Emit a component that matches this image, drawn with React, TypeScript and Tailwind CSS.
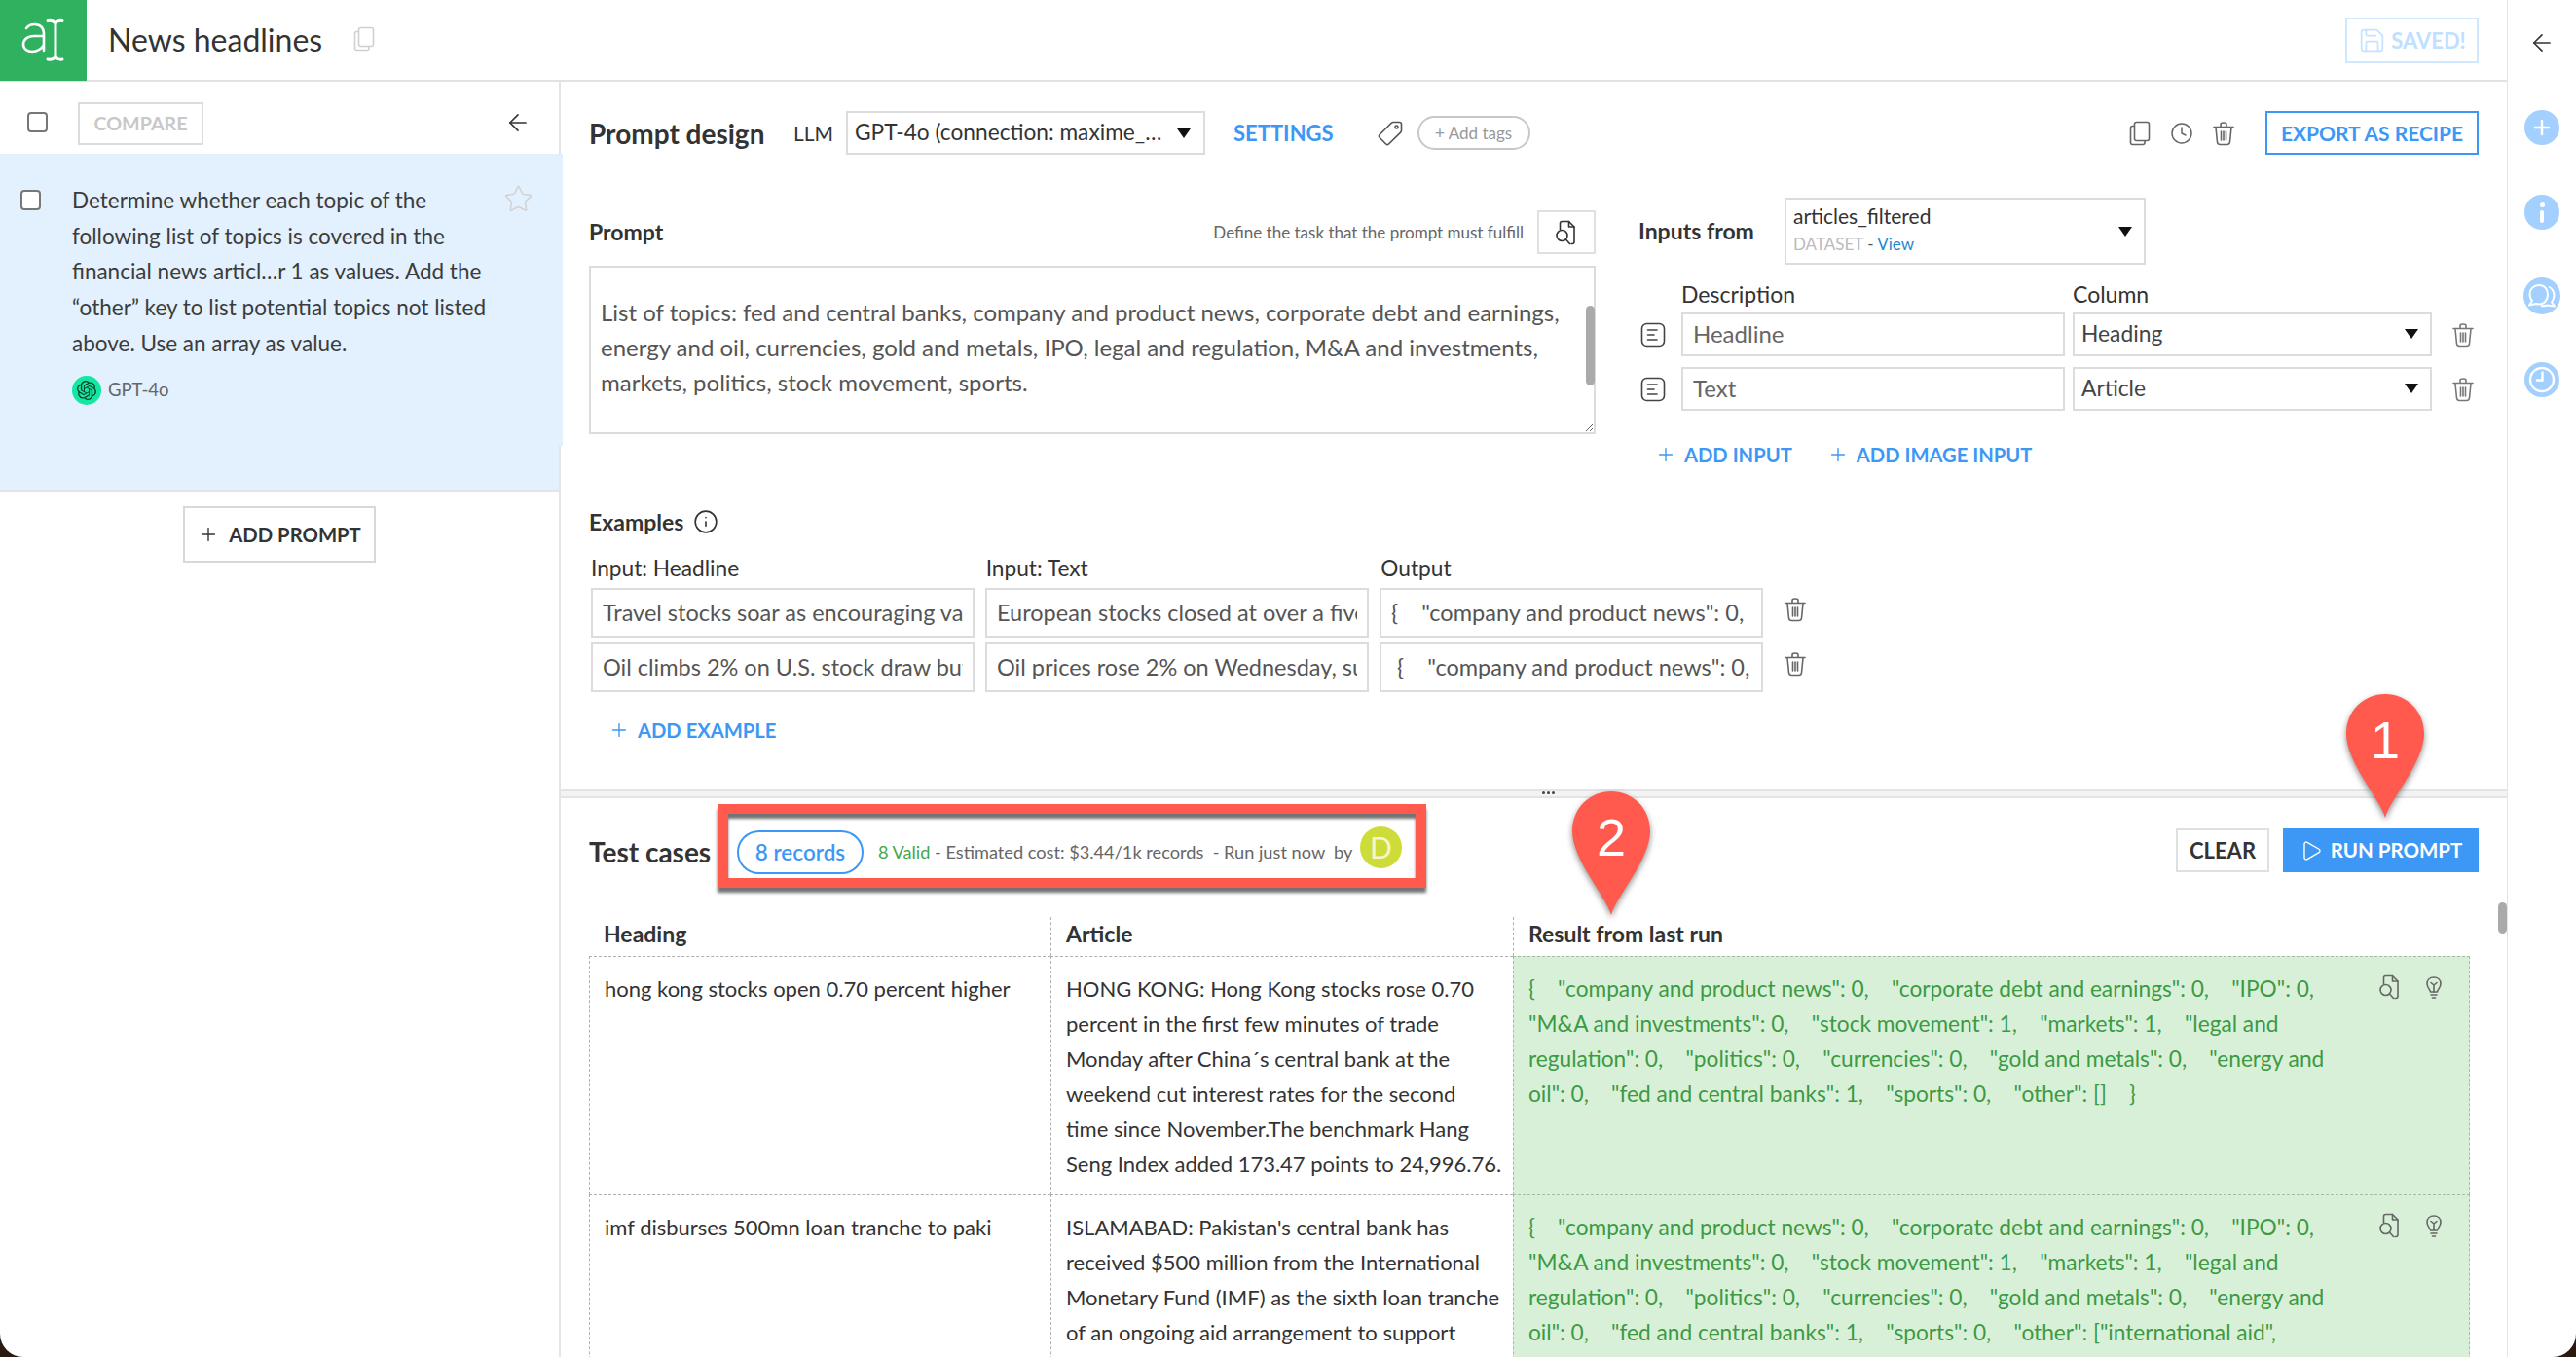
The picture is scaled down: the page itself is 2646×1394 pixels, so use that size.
import React from "react";
import { ArrowLeft, Plus, Star, Info, Play, Save, Clock } from "lucide-react";
import { SiOpenai } from "react-icons/si";

const Caret = () => (
  <svg width="14" height="10" viewBox="0 0 14 10" className="shrink-0"><path d="M0 0H14L7 10Z" fill="#111" /></svg>
);

const Trash = ({ c = "#666", s = 26 }: { c?: string; s?: number }) => (
  <svg width={s} height={s} viewBox="0 0 26 26" fill="none" stroke={c} strokeWidth="1.6" strokeLinecap="round" strokeLinejoin="round" className="shrink-0">
    <path d="M3 6.500H23" /><path d="M10 6V3.500C10 2.500 11 2 13 2S16 2.500 16 3.500V6" />
    <path d="M5 7L6.500 22C6.700 23.500 8 24.500 9.500 24.500H16.500C18 24.500 19.300 23.500 19.500 22L21 7" />
    <path d="M10.500 11V20M13 11V20M15.500 11V20" />
  </svg>
);

const CopyIcon = ({ c = "#666", s = 26 }: { c?: string; s?: number }) => (
  <svg width={s} height={s} viewBox="0 0 26 26" fill="none" stroke={c} strokeWidth="1.6" strokeLinejoin="round" className="shrink-0">
    <rect x="7.500" y="1.500" width="15" height="19" rx="2" />
    <path d="M7.500 5.500H5.500C4.400 5.500 3.500 6.400 3.500 7.500V22.500C3.500 23.600 4.400 24.500 5.500 24.500H16C17.100 24.500 18 23.600 18 22.500V20.500" />
  </svg>
);

const FileSearch = ({ c = "#666", s = 26 }: { c?: string; s?: number }) => (
  <svg width={s} height={s} viewBox="0 0 26 26" fill="none" stroke={c} strokeWidth="1.6" strokeLinecap="round" strokeLinejoin="round" className="shrink-0">
    <path d="M6.500 10V3.500C6.500 2.400 7.400 1.500 8.500 1.500H15.500L21 7V22.500C21 23.600 20.100 24.500 19 24.500H18" />
    <path d="M15.500 1.500V7H21" />
    <circle cx="8.500" cy="16" r="5.500" /><path d="M12.500 20L16.500 24.500" />
  </svg>
);

const Bulb = ({ c = "#666", s = 24 }: { c?: string; s?: number }) => (
  <svg width={s} height={s} viewBox="0 0 24 24" fill="none" stroke={c} strokeWidth="1.6" strokeLinecap="round" strokeLinejoin="round" className="shrink-0">
    <path d="M8.500 17C8.300 14.500 5 13 5 8.500C5 4.500 8 2 12 2S19 4.500 19 8.500C19 13 15.700 14.500 15.500 17Z" />
    <path d="M9 20H15M10.500 23H13.500M12 17V10M9 7.500L12 10L15 7.500" />
  </svg>
);

const TagIcon = () => (
  <svg width="28" height="28" viewBox="0 0 28 28" fill="none" stroke="#555" strokeWidth="1.6" strokeLinejoin="round" className="ml-[44px] shrink-0">
    <path d="M3 15.500L15 3.500C15.600 2.900 16.300 2.500 17 2.500H23.500C24.600 2.500 25.500 3.400 25.500 4.500V11C25.500 11.800 25.200 12.500 24.600 13.100L12.500 25C11.700 25.800 10.500 25.800 9.700 25L3 18.300C2.200 17.500 2.200 16.300 3 15.500Z" />
    <circle cx="20.500" cy="7.500" r="1.500" />
  </svg>
);

const DocLines = () => (
  <svg width="26" height="26" viewBox="0 0 26 26" fill="none" stroke="#444" strokeWidth="1.6" strokeLinecap="round" className="shrink-0">
    <rect x="1.500" y="1.500" width="23" height="23" rx="5" />
    <path d="M7.500 8H17M7.500 13H14M7.500 18H17" />
  </svg>
);

const RailCircle = ({ children, big }: { children: React.ReactNode; big?: boolean }) => (
  <div className={`flex items-center justify-center rounded-full bg-[#a3d0ff] ${big ? "h-[38px] w-[38px]" : "h-[36px] w-[36px]"}`}>{children}</div>
);

const Pin = ({ label, left, top }: { label: string; left: number; top: number }) => (
  <div className="absolute h-[130px] w-[90px]" style={{ left, top }}>
    <svg width="90" height="134" viewBox="0 0 90 134" className="absolute left-0 top-0 drop-shadow-[0_3px_3px_rgba(0,0,0,0.45)]">
      <path d="M45 127C40 108 5 70 5 41C5 17 23 0 45 0S85 17 85 41C85 70 50 108 45 127Z" fill="#ff5a4d" />
    </svg>
    <span className="absolute left-0 top-[16px] w-[90px] text-center text-[54px] leading-[62px] text-white [font-family:'Liberation_Sans',Arial,sans-serif]">{label}</span>
  </div>
);

const Field = ({ value }: { value: string }) => (
  <input readOnly value={value} className="h-[51px] w-full min-w-0 border-2 border-[#dcdcdc] bg-white px-[10px] pb-[2px] text-[23.500px] text-[#555] outline-none" />
);

const cardLines = [
  "Determine whether each topic of the",
  "following list of topics is covered in the",
  "financial news articl…r 1 as values. Add the",
  "“other” key to list potential topics not listed",
  "above. Use an array as value.",
];

const article1 = [
  "HONG KONG: Hong Kong stocks rose 0.70",
  "percent in the first few minutes of trade",
  "Monday after China´s central bank at the",
  "weekend cut interest rates for the second",
  "time since November.The benchmark Hang",
  "Seng Index added 173.47 points to 24,996.76.",
];
const article2 = [
  "ISLAMABAD: Pakistan's central bank has",
  "received $500 million from the International",
  "Monetary Fund (IMF) as the sixth loan tranche",
  "of an ongoing aid arrangement to support",
];
const result1 = [
  '{    "company and product news": 0,    "corporate debt and earnings": 0,    "IPO": 0,',
  '"M&A and investments": 0,    "stock movement": 1,    "markets": 1,    "legal and',
  'regulation": 0,    "politics": 0,    "currencies": 0,    "gold and metals": 0,    "energy and',
  'oil": 0,    "fed and central banks": 1,    "sports": 0,    "other": []    }',
];
const result2 = [
  result1[0],
  result1[1],
  result1[2],
  'oil": 0,    "fed and central banks": 1,    "sports": 0,    "other": ["international aid",',
];

const Lines = ({ lines, className = "" }: { lines: string[]; className?: string }) => (
  <div className={className}>
    {lines.map((l, i) => (
      <div key={i} className="whitespace-pre">{l}</div>
    ))}
  </div>
);

const ResultCell = ({ lines, h }: { lines: string[]; h: string }) => (
  <div className={`relative border-t border-l border-r border-dashed border-[#a9b9a9] bg-[#d9f0d8] pl-[15px] pt-[15px] ${h}`}>
    <Lines lines={lines} className="text-[22.700px] leading-[36px] text-[#3c9a44]" />
    <div className="absolute right-[24px] top-[18px] flex items-center gap-[20px]">
      <FileSearch c="#666" />
      <Bulb c="#666" />
    </div>
  </div>
);

const Cell = ({ children, h }: { children: React.ReactNode; h: string }) => (
  <div className={`border-t border-l border-dashed border-[#b0b0b0] pl-[15px] pt-[15px] text-[#333] ${h}`}>
    {children}
  </div>
);

const rowText = "text-[22px] leading-[36px]";

export default function App() {
  return (
    <div className="h-[1394px] w-[2646px] overflow-hidden bg-[#2a1a12] [font-family:Lato,'Noto_Sans',sans-serif]">
      <div className="relative flex h-[1394px] w-[2646px] overflow-hidden rounded-b-[24px] bg-white text-[#333]">
        <div className="flex w-[2576px] flex-col border-r border-[#e4e4e4]">
          {/* Header */}
          <header className="flex h-[84px] shrink-0 items-start border-b-2 border-[#e2e2e2]">
            <div className="h-[83px] w-[89px] shrink-0 bg-[#2fb160]">
              <svg width="89" height="83" viewBox="0 0 89 83" fill="none" stroke="#fff" strokeLinecap="round" strokeLinejoin="round">
                <path strokeWidth="2.600" d="M27 29C31 24 44 22 45 34V52M45 37H35C28 37 24 41 24 45.500C24 50 28 53 33 53C38 53 43 50 45 46" />
                <path strokeWidth="3" d="M49 21.500C53 21 57 22 57 25.500C57 22 61 21 64 21.500M57 25.500V57M49 61C53 61.500 57 60.500 57 57C57 60.500 61 61.500 64 61" />
              </svg>
            </div>
            <h1 className="ml-[22px] mt-[20px] text-[32px] font-normal leading-[42px] text-[#333]">News headlines</h1>
            <div className="ml-[30px] mt-[27px]"><CopyIcon c="#d0d0d0" s={26} /></div>
            <div className="ml-auto mr-[29px] mt-[18px] flex h-[47px] w-[137px] items-center justify-center gap-[5px] border-2 border-[#cfe7ff] text-[22px] font-bold text-[#bfe0ff]">
              <Save size={29} strokeWidth={1.4} color="#c5e2ff" />
              SAVED!
            </div>
          </header>

          <div className="flex min-h-0 flex-1">
            {/* Sidebar */}
            <aside className="w-[576px] shrink-0 border-r-2 border-[#e4e4e4]">
              <div className="flex h-[74px] items-start">
                <div className="ml-[28px] mt-[31px] h-[21px] w-[21px] rounded-[4px] border-2 border-[#777] bg-white" />
                <div className="ml-[31px] mt-[21px] flex h-[44px] w-[129px] items-center justify-center border-2 border-[#dcdcdc] text-[19.700px] font-bold text-[#c8c8c8]">COMPARE</div>
                <ArrowLeft size={28} strokeWidth={1.4} color="#333" className="ml-auto mr-[28px] mt-[28px]" />
              </div>
              <div className="h-[347px] border-b-2 border-[#e4e4e4] bg-[#e3f0fd]">
                <div className="flex h-[300px] w-[578px] bg-[#e3f0fd] pt-[34px]">
                  <div className="ml-[21px] mt-[3px] h-[21px] w-[21px] shrink-0 rounded-[4px] border-2 border-[#777] bg-white" />
                  <div className="ml-[32px]">
                    <Lines lines={cardLines} className="-mt-[4px] text-[22.500px] leading-[36.700px] text-[#3c3c3c]" />
                    <div className="mt-[14px] flex items-center gap-[7px]">
                      <div className="flex h-[30px] w-[30px] items-center justify-center rounded-full bg-[#12e8a0]">
                        <SiOpenai size={20} color="#0d3b2e" />
                      </div>
                      <span className="text-[18.500px] text-[#666]">GPT-4o</span>
                    </div>
                  </div>
                  <Star size={31} strokeWidth={1.2} color="#d2d2d2" className="absolute left-[517px] top-[189px]" />
                </div>
              </div>
              <div className="mt-[15px] flex justify-center">
                <div className="flex h-[58px] w-[198px] items-center justify-center gap-[10px] border-2 border-[#d8d8d8] text-[20.300px] font-bold text-[#333]">
                  <Plus size={22} strokeWidth={1.5} />ADD PROMPT
                </div>
              </div>
            </aside>

            {/* Main */}
            <main className="flex min-w-0 flex-1 flex-col">
              <section className="h-[727px] shrink-0 pl-[29px] pr-[29px] pt-[30px]">
                {/* Toolbar */}
                <div className="flex h-[45px] items-center">
                  <h2 className="w-[210px] shrink-0 text-[28px] font-bold text-[#333]">Prompt design</h2>
                  <span className="w-[54px] shrink-0 text-[21px] text-[#333]">LLM</span>
                  <div className="flex h-[45px] w-[369px] shrink-0 items-center justify-between border-2 border-[#dcdcdc] pl-[7px] pr-[13px] text-[22.700px] text-[#333]">
                    <span className="whitespace-nowrap">GPT-4o (connection: maxime_…</span><Caret />
                  </div>
                  <span className="ml-[29px] text-[22px] font-bold text-[#3d98f5]">SETTINGS</span>
                  <TagIcon />
                  <div className="ml-[14px] flex h-[35px] w-[116px] items-center justify-center rounded-full border-2 border-[#c8c8c8] text-[17px] text-[#999]">+ Add tags</div>
                  <div className="ml-auto flex items-center">
                    <CopyIcon c="#666" />
                    <Clock size={24} strokeWidth={1.5} color="#666" className="ml-[18px]" />
                    <div className="ml-[18px]"><Trash c="#666" /></div>
                    <div className="ml-[30px] flex h-[45px] w-[219px] items-center justify-center border-2 border-[#3d98f5] text-[21px] font-bold text-[#3d98f5]">EXPORT AS RECIPE</div>
                  </div>
                </div>

                {/* Two columns */}
                <div className="mt-[44px] flex gap-[44px]">
                  <div className="w-[1034px] shrink-0 pt-[13px]">
                    <div className="flex h-[45px] items-center">
                      <span className="text-[23px] font-bold text-[#333]">Prompt</span>
                      <span className="ml-auto text-[17px] text-[#666]">Define the task that the prompt must fulfill</span>
                      <div className="ml-[14px] flex h-[45px] w-[60px] items-center justify-center border-2 border-[#e0e0e0]"><FileSearch c="#333" /></div>
                    </div>
                    <div className="relative mt-[12px]">
                      <textarea
                        readOnly
                        wrap="off"
                        value={"List of topics: fed and central banks, company and product news, corporate debt and earnings,\nenergy and oil, currencies, gold and metals, IPO, legal and regulation, M&A and investments,\nmarkets, politics, stock movement, sports."}
                        className="block h-[173px] w-full overflow-hidden border-2 border-[#dcdcdc] px-[10px] pt-[28px] text-[24px] leading-[36px] text-[#555] outline-none"
                      />
                      <div className="absolute right-[1px] top-[41px] h-[82px] w-[9px] rounded-full bg-[#aaa]" />
                    </div>
                  </div>

                  <div className="min-w-0 flex-1">
                    <div className="flex h-[69px] items-center">
                      <span className="w-[150px] shrink-0 text-[23px] font-bold text-[#333]">Inputs from</span>
                      <div className="flex h-[69px] w-[371px] items-center justify-between border-2 border-[#dcdcdc] pl-[7px] pr-[12px]">
                        <div className="pb-[4px]">
                          <div className="text-[21px] leading-[30px] text-[#333]">articles_filtered</div>
                          <div className="text-[17px] leading-[28px] text-[#bbb]">DATASET <span className="text-[#555]">-</span> <span className="text-[#1d8ad0]">View</span></div>
                        </div>
                        <Caret />
                      </div>
                    </div>
                    <div className="mt-[14px] flex h-[32px] items-center text-[23px] text-[#333]">
                      <span className="ml-[44px] w-[402px]">Description</span>
                      <span>Column</span>
                    </div>
                    {[["Headline", "Heading"], ["Text", "Article"]].map(([d, c], i) => (
                      <div key={d} className={`flex h-[45px] items-center ${i ? "mt-[11px]" : "mt-[3px]"}`}>
                        <div className="ml-[2px]"><DocLines /></div>
                        <input readOnly value={d} className="ml-[16px] h-[45px] w-[394px] border-2 border-[#dcdcdc] px-[10px] pb-[2px] text-[24px] text-[#666] outline-none" />
                        <div className="ml-[8px] flex h-[45px] w-[369px] items-center justify-between border-2 border-[#dcdcdc] pb-[2px] pl-[7px] pr-[12px] text-[22.800px] text-[#444]">
                          {c}<Caret />
                        </div>
                        <div className="ml-[19px]"><Trash c="#777" /></div>
                      </div>
                    ))}
                    <div className="mt-[30px] flex h-[30px] items-center text-[20.200px] font-bold text-[#3d98f5]">
                      <span className="ml-[17px] flex items-center gap-[8px]"><Plus size={22} strokeWidth={1.5} />ADD INPUT</span>
                      <span className="ml-[36px] flex items-center gap-[8px]"><Plus size={22} strokeWidth={1.5} />ADD IMAGE INPUT</span>
                    </div>
                  </div>
                </div>

                {/* Examples */}
                <div className="mt-[39px] flex h-[30px] items-center gap-[10px]">
                  <span className="text-[23px] font-bold text-[#333]">Examples</span>
                  <Info size={26} strokeWidth={1.5} color="#333" />
                </div>
                <div className="mt-[18px] ml-[2px] grid w-[1206px] grid-cols-3 gap-x-[11px] text-[22.700px] leading-[30px] text-[#333]">
                  <span>Input: Headline</span><span>Input: Text</span><span>Output</span>
                </div>
                <div className="mt-[5px] ml-[2px] flex flex-col gap-[5px]">
                  {[
                    ["Travel stocks soar as encouraging vaccine news", "European stocks closed at over a five-week high", '{    "company and product news": 0,    "corporate'],
                    ["Oil climbs 2% on U.S. stock draw but gains limited", "Oil prices rose 2% on Wednesday, supported by", ' {    "company and product news": 0,    "corporate'],
                  ].map((r, i) => (
                    <div key={i} className="flex items-start">
                      <div className="grid w-[1204px] grid-cols-3 gap-x-[11px]">
                        {r.map((v, j) => <Field key={j} value={v} />)}
                      </div>
                      <div className="ml-[20px] mt-[9px]"><Trash c="#666" /></div>
                    </div>
                  ))}
                </div>
                <div className="ml-[20px] mt-[24px] flex h-[30px] items-center gap-[8px] text-[20.200px] font-bold text-[#3d98f5]">
                  <Plus size={22} strokeWidth={1.5} />ADD EXAMPLE
                </div>
              </section>

              {/* Divider */}
              <div className="relative h-[9px] shrink-0 border-y-2 border-[#e4e4e4] bg-[#f3f3f3]">
                <span className="absolute left-[1008px] top-0 flex gap-[2px]">
                  <i className="h-[3px] w-[3px] rounded-full bg-[#444]" /><i className="h-[3px] w-[3px] rounded-full bg-[#444]" /><i className="h-[3px] w-[3px] rounded-full bg-[#444]" />
                </span>
              </div>

              {/* Test cases */}
              <section className="min-h-0 flex-1 pl-[29px] pr-[29px] pt-[6px]">
                <div className="flex h-[86px] items-center">
                  <h2 className="mt-[12px] w-[132px] shrink-0 text-[28px] font-bold text-[#333]">Test cases</h2>
                  <div className="flex h-[86px] w-[728px] shrink-0 items-center border-x-[11px] border-y-[10px] border-[#ff5a4d] bg-white pl-[9px] shadow-[0_5px_3px_rgba(0,0,0,0.55),inset_0_5px_3px_rgba(0,0,0,0.55)]">
                    <div className="mt-[13px] flex h-[45px] w-[130px] shrink-0 items-center justify-center rounded-full border-2 border-[#3d98f5] text-[22.500px] font-semibold text-[#3d98f5]">8 records</div>
                    <span className="ml-[15px] mt-[13px] whitespace-pre text-[18.200px] text-[#666]"><span className="text-[#46a84a]">8 Valid</span> - Estimated cost: $3.44/1k records  - Run just now  by</span>
                    <div className="ml-auto mr-[14px] mt-[3px] flex h-[43px] w-[43px] shrink-0 items-center justify-center rounded-full bg-[#cddc39] text-[30px] text-[#f3f7c9]">D</div>
                  </div>
                  <div className="ml-auto mt-[9px] flex items-center gap-[14px]">
                    <div className="flex h-[45px] w-[96px] items-center justify-center border-2 border-[#e0e0e0] text-[22px] font-bold text-[#333]">CLEAR</div>
                    <div className="flex h-[45px] w-[201px] items-center justify-center gap-[8px] bg-[#3d98f5] text-[20.500px] font-bold text-white">
                      <Play size={24} strokeWidth={1.4} />RUN PROMPT
                    </div>
                  </div>
                </div>

                <div className="mt-[30px] grid w-[1932px] grid-cols-[474px_475px_983px]">
                  <div className="h-[40px] pl-[15px] text-[23px] font-bold leading-[35px] text-[#333]">Heading</div>
                  <div className="h-[40px] border-l border-dashed border-[#b0b0b0] pl-[15px] text-[23px] font-bold leading-[35px] text-[#333]">Article</div>
                  <div className="h-[40px] border-l border-dashed border-[#b0b0b0] pl-[15px] text-[23px] font-bold leading-[35px] text-[#333]">Result from last run</div>

                  <Cell h="h-[245px]"><Lines lines={["hong kong stocks open 0.70 percent higher"]} className={rowText} /></Cell>
                  <Cell h="h-[245px]"><Lines lines={article1} className={rowText} /></Cell>
                  <ResultCell lines={result1} h="h-[245px]" />

                  <Cell h="h-[245px]"><Lines lines={["imf disburses 500mn loan tranche to paki"]} className={rowText} /></Cell>
                  <Cell h="h-[245px]"><Lines lines={article2} className={rowText} /></Cell>
                  <ResultCell lines={result2} h="h-[245px]" />
                </div>
              </section>
            </main>
          </div>
        </div>

        {/* Right rail */}
        <nav className="flex min-w-0 flex-1 flex-col items-center">
          <ArrowLeft size={28} strokeWidth={1.4} color="#333" className="mt-[30px]" />
          <div className="mt-[55px]">
            <RailCircle><Plus size={24} strokeWidth={2.400} color="#fff" /></RailCircle>
          </div>
          <div className="mt-[51px]">
            <RailCircle><span className="flex flex-col items-center gap-[3px]"><i className="h-[5px] w-[5px] rounded-full bg-white" /><i className="h-[13px] w-[4px] rounded-full bg-white" /></span></RailCircle>
          </div>
          <div className="mt-[49px]">
            <RailCircle big>
              <svg width="30" height="26" viewBox="0 0 30 26" fill="none" stroke="#fff" strokeWidth="2" strokeLinejoin="round">
                <path d="M12 2C6.500 2 2.500 6 2.500 11C2.500 14 3.500 16.500 5 18L2 22.500L9 21C10 21.300 11 21.500 12 21.500C17.500 21.500 21 17 21 11.500C21 6 17.500 2 12 2Z" />
                <path d="M22 3.500C25.500 5.500 27.500 8.500 27.500 12.500C27.500 15.500 26.500 17.500 25 19.500L28 23.500L20 22.500C18 23.500 16 23.500 14 23" />
              </svg>
            </RailCircle>
          </div>
          <div className="mt-[49px]">
            <RailCircle>
              <svg width="30" height="30" viewBox="0 0 30 30" fill="none" stroke="#fff" strokeWidth="2.400" strokeLinecap="round">
                <circle cx="15" cy="15" r="12" /><path d="M15.500 7.500V15.500H10" />
              </svg>
            </RailCircle>
          </div>
        </nav>

        {/* Scrollbar and callouts */}
        <div className="absolute left-[2566px] top-[927px] h-[32px] w-[9px] rounded-full bg-[#aaa]" />
        <Pin label="1" left={2405} top={713} />
        <Pin label="2" left={1610} top={813} />
      </div>
    </div>
  );
}
